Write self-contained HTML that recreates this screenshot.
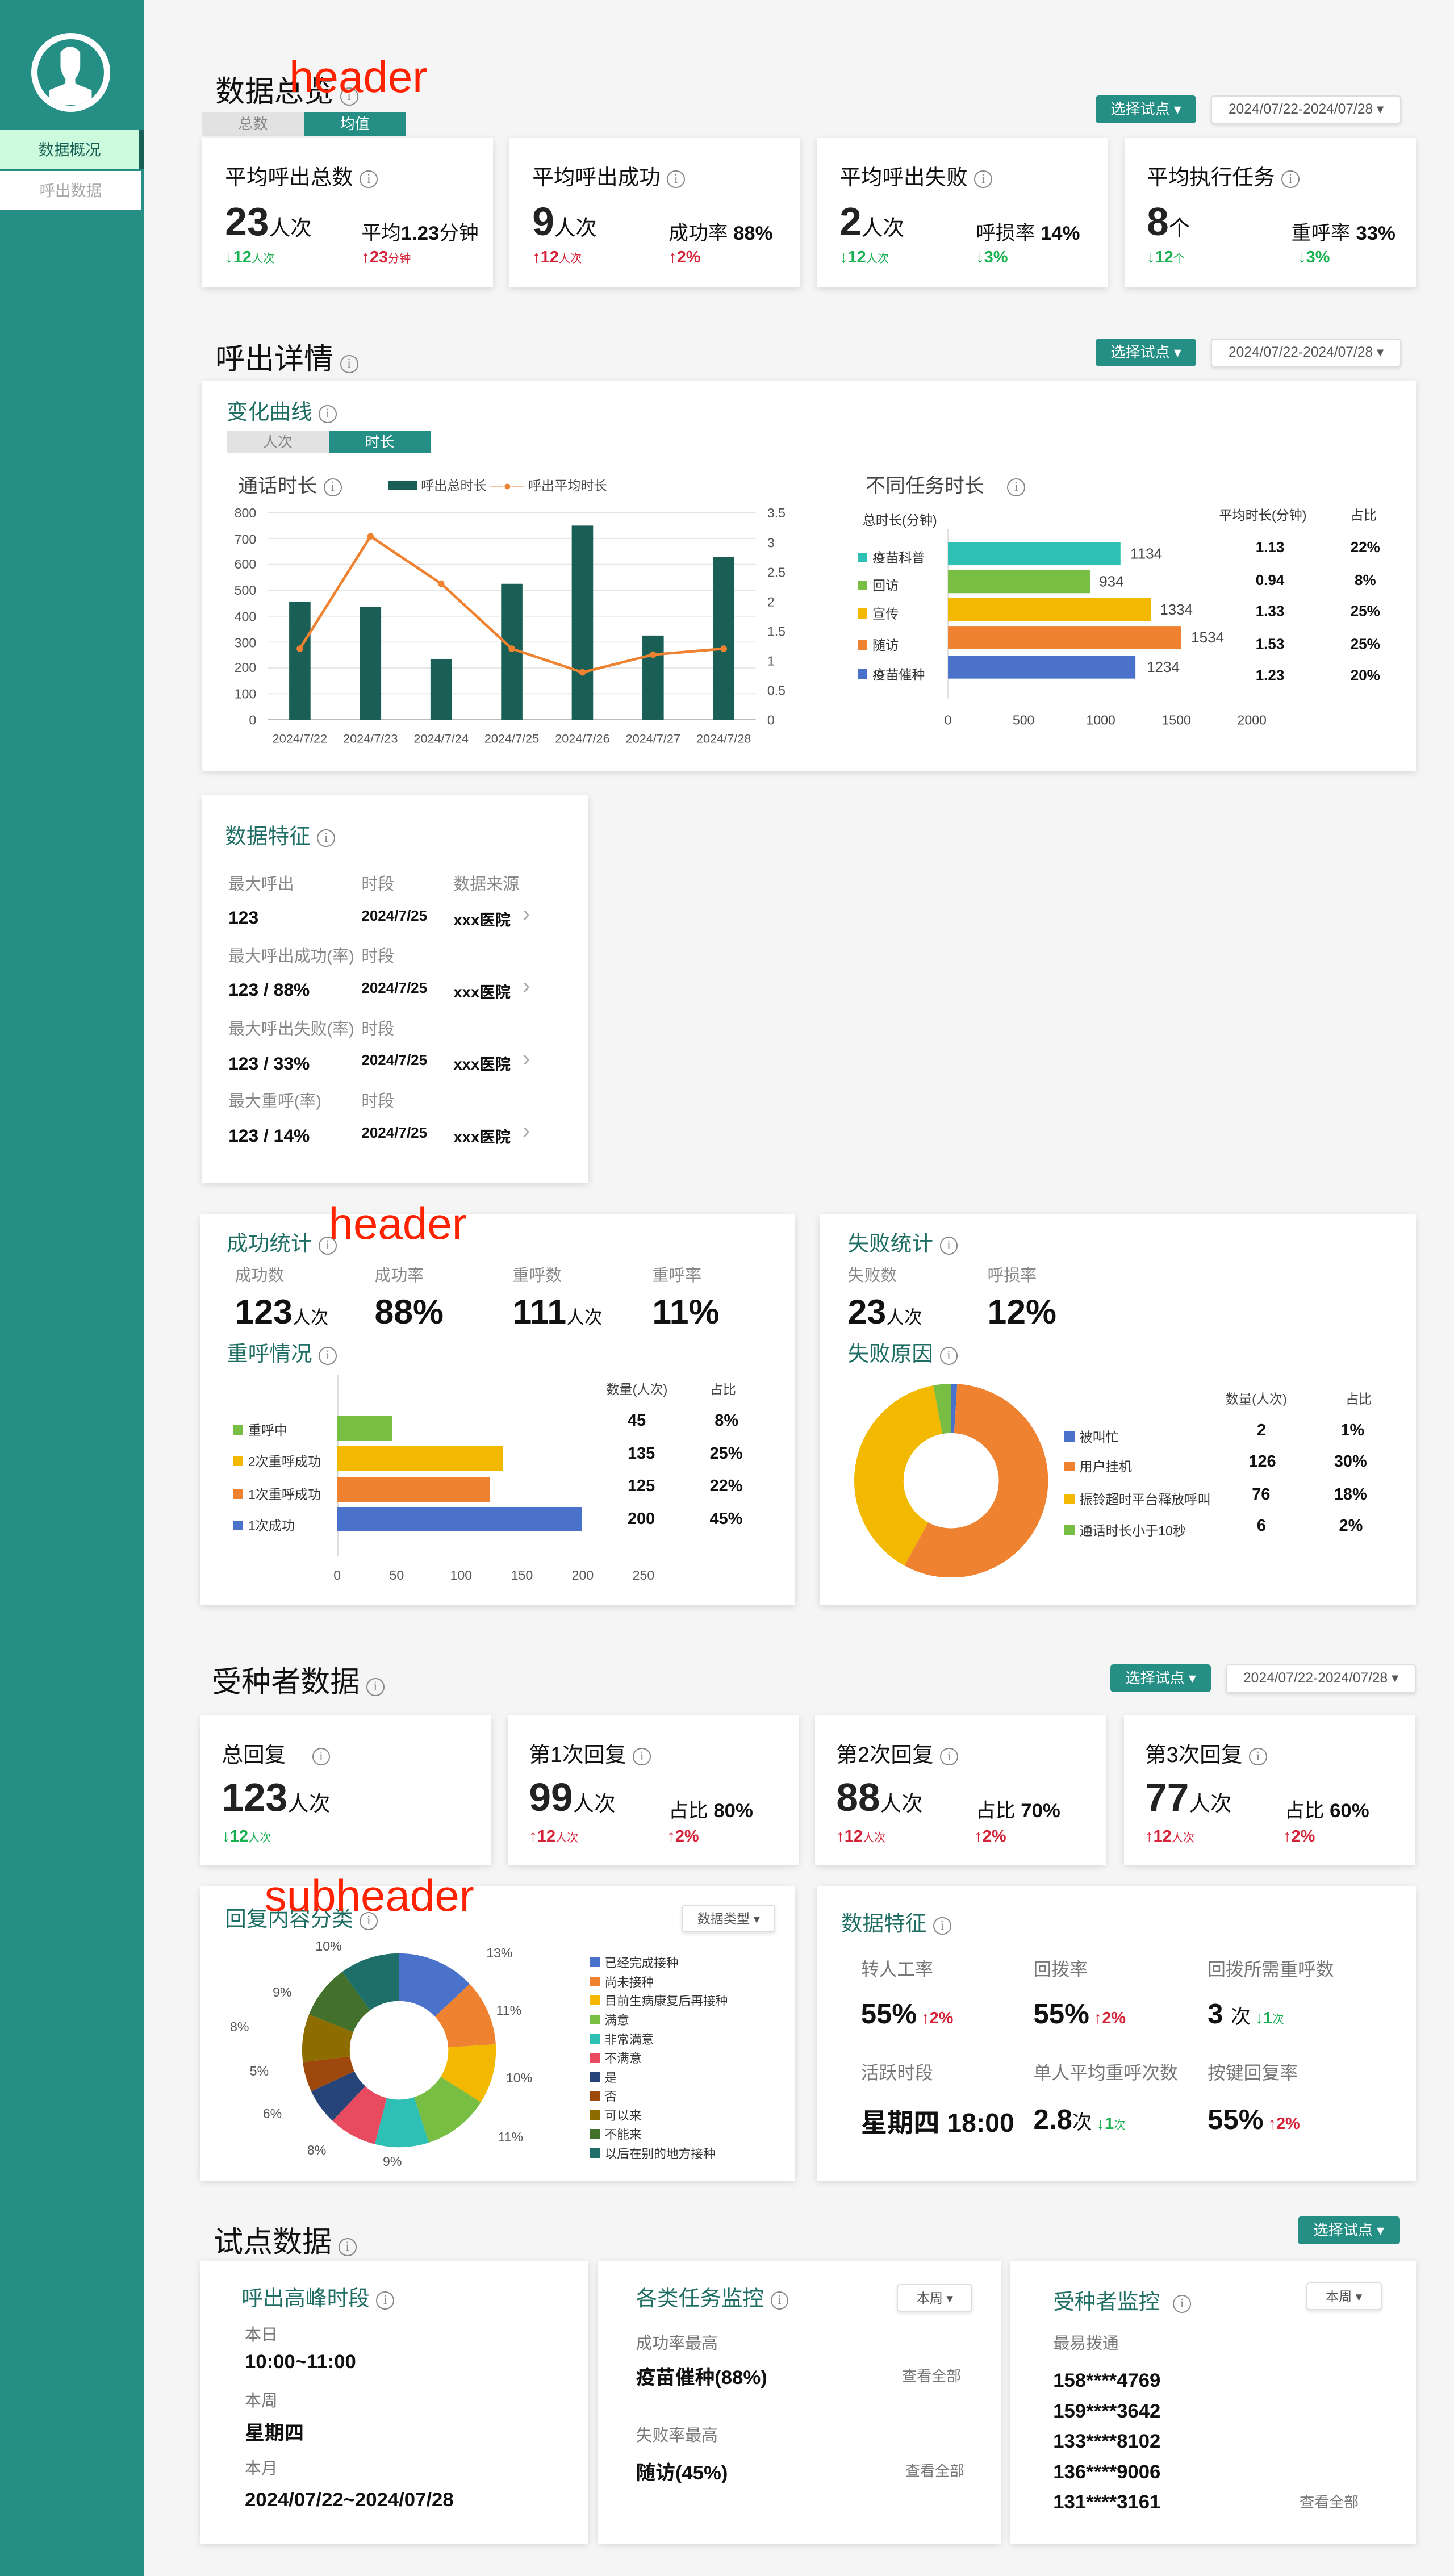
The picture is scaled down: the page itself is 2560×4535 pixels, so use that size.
<!DOCTYPE html>
<html><head><meta charset="utf-8">
<style>
*{margin:0;padding:0;box-sizing:border-box}
html,body{width:2560px;height:4535px;overflow:hidden;background:#f5f5f5}
#z{zoom:2.89266;width:885px;height:1568px;position:relative;font-family:"Liberation Sans","Noto Sans CJK SC",sans-serif;color:#111}
.a{position:absolute;white-space:nowrap}
.card{position:absolute;background:#fff;box-shadow:0 1px 4px rgba(0,0,0,.12)}
.i{display:inline-block;width:11px;height:11px;border:1px solid #888;border-radius:50%;font-size:8px;line-height:9px;text-align:center;color:#888;vertical-align:1px;margin-left:4px;font-family:"Liberation Serif",serif}
.h1{font-size:18px;color:#111}
.ct{font-size:13px;color:#1e6e63}
.gt{font-size:10px;color:#888}
.btn{position:absolute;background:#258f85;color:#fff;font-size:9px;border-radius:2px;text-align:center;line-height:17px}
.dt{position:absolute;background:#fff;border:1px solid #ddd;color:#555;font-size:8.5px;border-radius:2px;text-align:center;line-height:16px;box-shadow:0 1px 2px rgba(0,0,0,.1)}
.big{font-size:24px;font-weight:bold;color:#222}
.u{font-size:13px;font-weight:normal;color:#111}
.g{color:#18b050;font-size:10px;font-weight:bold}
.r{color:#d5243a;font-size:10px;font-weight:bold}
.s{font-size:7px;font-weight:normal}
.b{font-weight:bold}
.red{position:absolute;color:#ff2200;font-size:27px;white-space:nowrap;font-family:"Liberation Sans",sans-serif}
.lg{display:inline-block;width:6px;height:6px;margin-right:3px}
.ax{font-size:8px;color:#555}
</style></head><body><div id="z">

<!-- sidebar -->
<div class="a" style="left:0;top:0;width:87.5px;height:1568px;background:#258f85"></div>
<div class="a" style="left:19px;top:20px;width:48px;height:48px;border:4px solid #fff;border-radius:50%;overflow:hidden">
<svg width="40" height="40" viewBox="0 0 40 40" style="position:absolute;left:0;top:0"><path d="M14 8 Q20 1 26 8 L26 17 Q25 22 23 24 L23 27 L33 31 L33 40 L7 40 L7 31 L17 27 L17 24 Q15 22 14 17 Z" fill="#fff"/></svg></div>
<div class="a" style="left:0;top:79px;width:87.5px;height:24px;background:#ccfadc;border-right:3px solid #1a5f56;font-size:9.5px;color:#1a5f56;text-align:center;line-height:24px">数据概况</div>
<div class="a" style="left:0;top:104px;width:86px;height:24px;background:#fff;font-size:9.5px;color:#aaa;text-align:center;line-height:24px">呼出数据</div>

<!-- section 1 -->
<div class="a h1" style="left:131px;top:41px">数据总览<span class="i">i</span></div>
<div class="red" style="left:176px;top:31px">header</div>
<div class="a" style="left:123px;top:68px;width:62px;height:15px;background:#e2e2e2;font-size:9px;color:#888;text-align:center;line-height:15px">总数</div>
<div class="a" style="left:185px;top:68px;width:62px;height:15px;background:#258f85;font-size:9px;color:#fff;text-align:center;line-height:15px">均值</div>
<div class="btn" style="left:667px;top:58px;width:61px">选择试点 ▾</div>
<div class="dt" style="left:737px;top:58px;width:116px">2024/07/22-2024/07/28 ▾</div>

<div class="card" style="left:123px;top:84px;width:177px;height:91px">
<div class="a" style="left:14px;top:13px;font-size:13px">平均呼出总数<span class="i">i</span></div>
<div class="a big" style="left:14px;top:37px">23<span class="u">人次</span></div>
<div class="a" style="left:97px;top:48px;font-size:12px">平均<b>1.23</b>分钟</div>
<div class="a g" style="left:14px;top:67px">↓12<span class="s">人次</span></div>
<div class="a r" style="left:97px;top:67px">↑23<span class="s">分钟</span></div></div>

<div class="card" style="left:310px;top:84px;width:177px;height:91px">
<div class="a" style="left:14px;top:13px;font-size:13px">平均呼出成功<span class="i">i</span></div>
<div class="a big" style="left:14px;top:37px">9<span class="u">人次</span></div>
<div class="a" style="left:97px;top:48px;font-size:12px">成功率 <b>88%</b></div>
<div class="a r" style="left:14px;top:67px">↑12<span class="s">人次</span></div>
<div class="a r" style="left:97px;top:67px">↑2%</div></div>

<div class="card" style="left:497px;top:84px;width:177px;height:91px">
<div class="a" style="left:14px;top:13px;font-size:13px">平均呼出失败<span class="i">i</span></div>
<div class="a big" style="left:14px;top:37px">2<span class="u">人次</span></div>
<div class="a" style="left:97px;top:48px;font-size:12px">呼损率 <b>14%</b></div>
<div class="a g" style="left:14px;top:67px">↓12<span class="s">人次</span></div>
<div class="a g" style="left:97px;top:67px">↓3%</div></div>

<div class="card" style="left:685px;top:84px;width:177px;height:91px">
<div class="a" style="left:13px;top:13px;font-size:13px">平均执行任务<span class="i">i</span></div>
<div class="a big" style="left:13px;top:37px">8<span class="u">个</span></div>
<div class="a" style="left:101px;top:48px;font-size:12px">重呼率 <b>33%</b></div>
<div class="a g" style="left:13px;top:67px">↓12<span class="s">个</span></div>
<div class="a g" style="left:105px;top:67px">↓3%</div></div>

<!-- section 2 -->
<div class="a h1" style="left:131px;top:204px">呼出详情<span class="i">i</span></div>
<div class="btn" style="left:667px;top:206px;width:61px">选择试点 ▾</div>
<div class="dt" style="left:737px;top:206px;width:116px">2024/07/22-2024/07/28 ▾</div>

<div class="card" style="left:123px;top:232px;width:739px;height:237px">
<div class="a ct" style="left:15px;top:8px">变化曲线<span class="i">i</span></div>
<div class="a" style="left:15px;top:30px;width:62px;height:14px;background:#e2e2e2;font-size:9px;color:#888;text-align:center;line-height:14px">人次</div>
<div class="a" style="left:77px;top:30px;width:62px;height:14px;background:#258f85;font-size:9px;color:#fff;text-align:center;line-height:14px">时长</div>
<div class="a" style="left:22px;top:54px;font-size:12px;color:#444">通话时长<span class="i">i</span></div>
<div class="a" style="left:113px;top:57px;font-size:8px;color:#444"><span style="display:inline-block;width:18px;height:6px;background:#1a5f56;vertical-align:0"></span> 呼出总时长 <span style="color:#ee8230">—●—</span> 呼出平均时长</div>
<div class="a" style="left:404px;top:54px;font-size:12px;color:#444">不同任务时长<span class="i" style="margin-left:14px">i</span></div>
</div>

<svg class="a" style="left:0;top:0" width="885" height="480">
<g stroke="#e5e5e5" stroke-width="0.6">
<line x1="163" x2="460" y1="312" y2="312"/><line x1="163" x2="460" y1="327.75" y2="327.75"/><line x1="163" x2="460" y1="343.5" y2="343.5"/><line x1="163" x2="460" y1="359.25" y2="359.25"/><line x1="163" x2="460" y1="375" y2="375"/><line x1="163" x2="460" y1="390.75" y2="390.75"/><line x1="163" x2="460" y1="406.5" y2="406.5"/><line x1="163" x2="460" y1="422.25" y2="422.25"/></g>
<line x1="163" x2="460" y1="438" y2="438" stroke="#bbb" stroke-width="0.7"/>
<g font-size="8" fill="#555" font-family="Liberation Sans" text-anchor="end">
<text x="156" y="315">800</text><text x="156" y="331">700</text><text x="156" y="346">600</text><text x="156" y="362">500</text><text x="156" y="378">400</text><text x="156" y="394">300</text><text x="156" y="409">200</text><text x="156" y="425">100</text><text x="156" y="441">0</text></g>
<g font-size="8" fill="#555" font-family="Liberation Sans">
<text x="467" y="315">3.5</text><text x="467" y="333">3</text><text x="467" y="351">2.5</text><text x="467" y="369">2</text><text x="467" y="387">1.5</text><text x="467" y="405">1</text><text x="467" y="423">0.5</text><text x="467" y="441">0</text></g>
<g fill="#1a5f56">
<rect x="176" y="366.3" width="13" height="71.7"/><rect x="219" y="369.5" width="13" height="68.5"/><rect x="262" y="401" width="13" height="37"/><rect x="305" y="355.3" width="13" height="82.7"/><rect x="348" y="319.9" width="13" height="118.1"/><rect x="391" y="386.8" width="13" height="51.2"/><rect x="434" y="338.8" width="13" height="99.2"/></g>
<polyline fill="none" stroke="#ee8230" stroke-width="1.6" points="182.5,394.8 225.5,326.4 268.5,355.2 311.5,394.8 354.5,409.2 397.5,398.4 440.5,394.8"/>
<g fill="#ee8230"><circle cx="182.5" cy="394.8" r="2"/><circle cx="225.5" cy="326.4" r="2"/><circle cx="268.5" cy="355.2" r="2"/><circle cx="311.5" cy="394.8" r="2"/><circle cx="354.5" cy="409.2" r="2"/><circle cx="397.5" cy="398.4" r="2"/><circle cx="440.5" cy="394.8" r="2"/></g>
<g font-size="7.5" fill="#555" font-family="Liberation Sans" text-anchor="middle">
<text x="182.5" y="452">2024/7/22</text><text x="225.5" y="452">2024/7/23</text><text x="268.5" y="452">2024/7/24</text><text x="311.5" y="452">2024/7/25</text><text x="354.5" y="452">2024/7/26</text><text x="397.5" y="452">2024/7/27</text><text x="440.5" y="452">2024/7/28</text></g>
<line x1="577" x2="577" y1="322" y2="425" stroke="#ddd" stroke-width="0.6"/>
<rect x="577" y="330" width="105" height="14" fill="#2ec0b5"/>
<rect x="577" y="347" width="86.4" height="14" fill="#78be43"/>
<rect x="577" y="364" width="123.4" height="14" fill="#f2b900"/>
<rect x="577" y="381" width="141.9" height="14" fill="#ee8230"/>
<rect x="577" y="399" width="114.1" height="14" fill="#4a72cb"/>
<g font-size="9" fill="#444" font-family="Liberation Sans">
<text x="688" y="340">1134</text><text x="669" y="357">934</text><text x="706" y="374">1334</text><text x="725" y="391">1534</text><text x="698" y="409">1234</text></g>
<g font-size="8" fill="#444" font-family="Liberation Sans" text-anchor="middle">
<text x="577" y="441">0</text><text x="623" y="441">500</text><text x="670" y="441">1000</text><text x="716" y="441">1500</text><text x="762" y="441">2000</text></g>
<g font-size="9" fill="#111" font-family="Liberation Sans" font-weight="bold" text-anchor="middle">
<text x="773" y="336">1.13</text><text x="773" y="356">0.94</text><text x="773" y="375">1.33</text><text x="773" y="395">1.53</text><text x="773" y="414">1.23</text>
<text x="831" y="336">22%</text><text x="831" y="356">8%</text><text x="831" y="375">25%</text><text x="831" y="395">25%</text><text x="831" y="414">20%</text></g>
</svg>
<div class="a" style="left:525px;top:310px;font-size:8px;color:#333">总时长(分钟)</div>
<div class="a" style="left:742px;top:307px;font-size:8px;color:#333">平均时长(分钟)</div>
<div class="a" style="left:822px;top:307px;font-size:8px;color:#333">占比</div>
<div class="a" style="left:522px;top:333px;font-size:8px;color:#333"><span class="lg" style="background:#2ec0b5"></span>疫苗科普</div>
<div class="a" style="left:522px;top:350px;font-size:8px;color:#333"><span class="lg" style="background:#78be43"></span>回访</div>
<div class="a" style="left:522px;top:367px;font-size:8px;color:#333"><span class="lg" style="background:#f2b900"></span>宣传</div>
<div class="a" style="left:522px;top:386px;font-size:8px;color:#333"><span class="lg" style="background:#ee8230"></span>随访</div>
<div class="a" style="left:522px;top:404px;font-size:8px;color:#333"><span class="lg" style="background:#4a72cb"></span>疫苗催种</div>

<!-- 数据特征 -->
<div class="card" style="left:123px;top:484px;width:235px;height:236px">
<div class="a ct" style="left:14px;top:14px">数据特征<span class="i">i</span></div>
<div class="a gt" style="left:16px;top:46px">最大呼出</div><div class="a gt" style="left:97px;top:46px">时段</div><div class="a gt" style="left:153px;top:46px">数据来源</div>
<div class="a b" style="left:16px;top:68px;font-size:11px">123</div><div class="a b" style="left:97px;top:68px;font-size:9px">2024/7/25</div><div class="a b" style="left:153px;top:68px;font-size:9.5px">xxx医院</div><div class="a" style="left:195px;top:64px;color:#aaa;font-size:14px">›</div>
<div class="a gt" style="left:16px;top:90px">最大呼出成功(率)</div><div class="a gt" style="left:97px;top:90px">时段</div>
<div class="a b" style="left:16px;top:112px;font-size:11px">123 / 88%</div><div class="a b" style="left:97px;top:112px;font-size:9px">2024/7/25</div><div class="a b" style="left:153px;top:112px;font-size:9.5px">xxx医院</div><div class="a" style="left:195px;top:108px;color:#aaa;font-size:14px">›</div>
<div class="a gt" style="left:16px;top:134px">最大呼出失败(率)</div><div class="a gt" style="left:97px;top:134px">时段</div>
<div class="a b" style="left:16px;top:157px;font-size:11px">123 / 33%</div><div class="a b" style="left:97px;top:156px;font-size:9px">2024/7/25</div><div class="a b" style="left:153px;top:156px;font-size:9.5px">xxx医院</div><div class="a" style="left:195px;top:152px;color:#aaa;font-size:14px">›</div>
<div class="a gt" style="left:16px;top:178px">最大重呼(率)</div><div class="a gt" style="left:97px;top:178px">时段</div>
<div class="a b" style="left:16px;top:201px;font-size:11px">123 / 14%</div><div class="a b" style="left:97px;top:200px;font-size:9px">2024/7/25</div><div class="a b" style="left:153px;top:200px;font-size:9.5px">xxx医院</div><div class="a" style="left:195px;top:196px;color:#aaa;font-size:14px">›</div>
</div>

<!-- success -->
<div class="card" style="left:122px;top:739px;width:362px;height:238px">
<div class="a ct" style="left:16px;top:7px">成功统计<span class="i">i</span></div>
<div class="a gt" style="left:21px;top:29px">成功数</div><div class="a gt" style="left:106px;top:29px">成功率</div><div class="a gt" style="left:190px;top:29px">重呼数</div><div class="a gt" style="left:275px;top:29px">重呼率</div>
<div class="a b" style="left:21px;top:47px;font-size:21px">123<span style="font-size:11px;font-weight:normal">人次</span></div>
<div class="a b" style="left:106px;top:47px;font-size:21px">88%</div>
<div class="a b" style="left:190px;top:47px;font-size:21px">111<span style="font-size:11px;font-weight:normal">人次</span></div>
<div class="a b" style="left:275px;top:47px;font-size:21px">11%</div>
<div class="a ct" style="left:16px;top:74px">重呼情况<span class="i">i</span></div>
<div class="a" style="left:247px;top:100px;font-size:8px;color:#444">数量(人次)</div><div class="a" style="left:310px;top:100px;font-size:8px;color:#444">占比</div>
<div class="a" style="left:20px;top:125px;font-size:8px;color:#333"><span class="lg" style="background:#78be43"></span>重呼中</div>
<div class="a" style="left:20px;top:144px;font-size:8px;color:#333"><span class="lg" style="background:#f2b900"></span>2次重呼成功</div>
<div class="a" style="left:20px;top:164px;font-size:8px;color:#333"><span class="lg" style="background:#ee8230"></span>1次重呼成功</div>
<div class="a" style="left:20px;top:183px;font-size:8px;color:#333"><span class="lg" style="background:#4a72cb"></span>1次成功</div>
<div class="a" style="left:83px;top:98px;width:1px;height:110px;background:#ddd"></div>
<div class="a" style="left:83px;top:123px;width:34px;height:15px;background:#78be43"></div>
<div class="a" style="left:83px;top:141px;width:101px;height:15px;background:#f2b900"></div>
<div class="a" style="left:83px;top:160px;width:93px;height:15px;background:#ee8230"></div>
<div class="a" style="left:83px;top:178px;width:149px;height:15px;background:#4a72cb"></div>
<div class="a b" style="left:260px;top:120px;font-size:10px">45</div><div class="a b" style="left:313px;top:120px;font-size:10px">8%</div>
<div class="a b" style="left:260px;top:140px;font-size:10px">135</div><div class="a b" style="left:310px;top:140px;font-size:10px">25%</div>
<div class="a b" style="left:260px;top:160px;font-size:10px">125</div><div class="a b" style="left:310px;top:160px;font-size:10px">22%</div>
<div class="a b" style="left:260px;top:180px;font-size:10px">200</div><div class="a b" style="left:310px;top:180px;font-size:10px">45%</div>
<div class="a ax" style="left:81px;top:215px">0</div><div class="a ax" style="left:115px;top:215px">50</div><div class="a ax" style="left:152px;top:215px">100</div><div class="a ax" style="left:189px;top:215px">150</div><div class="a ax" style="left:226px;top:215px">200</div><div class="a ax" style="left:263px;top:215px">250</div>
</div>
<div class="red" style="left:200px;top:729px">header</div>

<!-- fail -->
<div class="card" style="left:499px;top:739px;width:363px;height:238px">
<div class="a ct" style="left:17px;top:7px">失败统计<span class="i">i</span></div>
<div class="a gt" style="left:17px;top:29px">失败数</div><div class="a gt" style="left:102px;top:29px">呼损率</div>
<div class="a b" style="left:17px;top:47px;font-size:21px">23<span style="font-size:11px;font-weight:normal">人次</span></div>
<div class="a b" style="left:102px;top:47px;font-size:21px">12%</div>
<div class="a ct" style="left:17px;top:74px">失败原因<span class="i">i</span></div>
<svg class="a" style="left:21px;top:103px" width="118" height="118" viewBox="-59 -59 118 118">
<g transform="rotate(-90)" fill="none" stroke-width="30">
<circle r="44" stroke="#4a72cb" stroke-dasharray="2.76 300" stroke-dashoffset="0"/>
<circle r="44" stroke="#ee8230" stroke-dasharray="157.58 300" stroke-dashoffset="-2.76"/>
<circle r="44" stroke="#f2b900" stroke-dasharray="107.82 300" stroke-dashoffset="-160.34"/>
<circle r="44" stroke="#78be43" stroke-dasharray="8.3 300" stroke-dashoffset="-268.16"/>
</g></svg>
<div class="a" style="left:247px;top:106px;font-size:8px;color:#444">数量(人次)</div><div class="a" style="left:320px;top:106px;font-size:8px;color:#444">占比</div>
<div class="a" style="left:149px;top:129px;font-size:8px;color:#333"><span class="lg" style="background:#4a72cb"></span>被叫忙</div>
<div class="a" style="left:149px;top:147px;font-size:8px;color:#333"><span class="lg" style="background:#ee8230"></span>用户挂机</div>
<div class="a" style="left:149px;top:167px;font-size:8px;color:#333"><span class="lg" style="background:#f2b900"></span>振铃超时平台释放呼叫</div>
<div class="a" style="left:149px;top:186px;font-size:8px;color:#333"><span class="lg" style="background:#78be43"></span>通话时长小于10秒</div>
<div class="a b" style="left:266px;top:126px;font-size:10px">2</div><div class="a b" style="left:317px;top:126px;font-size:10px">1%</div>
<div class="a b" style="left:261px;top:145px;font-size:10px">126</div><div class="a b" style="left:313px;top:145px;font-size:10px">30%</div>
<div class="a b" style="left:263px;top:165px;font-size:10px">76</div><div class="a b" style="left:313px;top:165px;font-size:10px">18%</div>
<div class="a b" style="left:266px;top:184px;font-size:10px">6</div><div class="a b" style="left:316px;top:184px;font-size:10px">2%</div>
</div>

<!-- section 受种者 -->
<div class="a h1" style="left:129px;top:1009px">受种者数据<span class="i">i</span></div>
<div class="btn" style="left:676px;top:1013px;width:61px">选择试点 ▾</div>
<div class="dt" style="left:746px;top:1013px;width:116px">2024/07/22-2024/07/28 ▾</div>

<div class="card" style="left:122px;top:1044px;width:177px;height:91px">
<div class="a" style="left:13px;top:13px;font-size:13px">总回复<span class="i" style="margin-left:16px">i</span></div>
<div class="a big" style="left:13px;top:36px">123<span class="u">人次</span></div>
<div class="a g" style="left:13px;top:68px">↓12<span class="s">人次</span></div></div>
<div class="card" style="left:309px;top:1044px;width:177px;height:91px">
<div class="a" style="left:13px;top:13px;font-size:13px">第1次回复<span class="i">i</span></div>
<div class="a big" style="left:13px;top:36px">99<span class="u">人次</span></div>
<div class="a" style="left:98px;top:48px;font-size:12px">占比 <b>80%</b></div>
<div class="a r" style="left:13px;top:68px">↑12<span class="s">人次</span></div><div class="a r" style="left:97px;top:68px">↑2%</div></div>
<div class="card" style="left:496px;top:1044px;width:177px;height:91px">
<div class="a" style="left:13px;top:13px;font-size:13px">第2次回复<span class="i">i</span></div>
<div class="a big" style="left:13px;top:36px">88<span class="u">人次</span></div>
<div class="a" style="left:98px;top:48px;font-size:12px">占比 <b>70%</b></div>
<div class="a r" style="left:13px;top:68px">↑12<span class="s">人次</span></div><div class="a r" style="left:97px;top:68px">↑2%</div></div>
<div class="card" style="left:684px;top:1044px;width:177px;height:91px">
<div class="a" style="left:13px;top:13px;font-size:13px">第3次回复<span class="i">i</span></div>
<div class="a big" style="left:13px;top:36px">77<span class="u">人次</span></div>
<div class="a" style="left:98px;top:48px;font-size:12px">占比 <b>60%</b></div>
<div class="a r" style="left:13px;top:68px">↑12<span class="s">人次</span></div><div class="a r" style="left:97px;top:68px">↑2%</div></div>

<!-- reply categories -->
<div class="card" style="left:122px;top:1148px;width:362px;height:179px">
<div class="a ct" style="left:15px;top:9px">回复内容分类<span class="i">i</span></div>
<div class="dt" style="left:293px;top:11px;width:57px;height:17px;font-size:8px">数据类型 ▾</div>
<svg class="a" style="left:61px;top:40px" width="120" height="120" viewBox="-60 -60 120 120">
<g transform="rotate(-90)" fill="none" stroke-width="29">
<circle r="44.5" stroke="#4a72cb" stroke-dasharray="36.35 300" stroke-dashoffset="0"/>
<circle r="44.5" stroke="#ee8230" stroke-dasharray="30.76 300" stroke-dashoffset="-36.35"/>
<circle r="44.5" stroke="#f2b900" stroke-dasharray="27.96 300" stroke-dashoffset="-67.11"/>
<circle r="44.5" stroke="#78be43" stroke-dasharray="30.76 300" stroke-dashoffset="-95.07"/>
<circle r="44.5" stroke="#2ec0b5" stroke-dasharray="25.16 300" stroke-dashoffset="-125.83"/>
<circle r="44.5" stroke="#e84a5f" stroke-dasharray="22.37 300" stroke-dashoffset="-150.99"/>
<circle r="44.5" stroke="#264478" stroke-dasharray="16.78 300" stroke-dashoffset="-173.36"/>
<circle r="44.5" stroke="#9e480e" stroke-dasharray="13.98 300" stroke-dashoffset="-190.14"/>
<circle r="44.5" stroke="#8d6d00" stroke-dasharray="22.37 300" stroke-dashoffset="-204.12"/>
<circle r="44.5" stroke="#43702b" stroke-dasharray="25.16 300" stroke-dashoffset="-226.49"/>
<circle r="44.5" stroke="#1e6f6a" stroke-dasharray="27.96 300" stroke-dashoffset="-251.65"/>
</g></svg>
<div class="a ax" style="left:174px;top:36px">13%</div><div class="a ax" style="left:180px;top:71px">11%</div><div class="a ax" style="left:186px;top:112px">10%</div><div class="a ax" style="left:181px;top:148px">11%</div><div class="a ax" style="left:111px;top:163px">9%</div><div class="a ax" style="left:65px;top:156px">8%</div><div class="a ax" style="left:38px;top:134px">6%</div><div class="a ax" style="left:30px;top:108px">5%</div><div class="a ax" style="left:18px;top:81px">8%</div><div class="a ax" style="left:44px;top:60px">9%</div><div class="a ax" style="left:70px;top:32px">10%</div>
<div class="a" style="left:237px;top:41px;font-size:7.5px;color:#333;line-height:11.6px">
<span class="lg" style="background:#4a72cb"></span>已经完成接种<br><span class="lg" style="background:#ee8230"></span>尚未接种<br><span class="lg" style="background:#f2b900"></span>目前生病康复后再接种<br><span class="lg" style="background:#78be43"></span>满意<br><span class="lg" style="background:#2ec0b5"></span>非常满意<br><span class="lg" style="background:#e84a5f"></span>不满意<br><span class="lg" style="background:#264478"></span>是<br><span class="lg" style="background:#9e480e"></span>否<br><span class="lg" style="background:#8d6d00"></span>可以来<br><span class="lg" style="background:#43702b"></span>不能来<br><span class="lg" style="background:#1e6f6a"></span>以后在别的地方接种</div>
</div>
<div class="red" style="left:161px;top:1138px">subheader</div>

<div class="card" style="left:497px;top:1148px;width:365px;height:179px">
<div class="a ct" style="left:15px;top:12px">数据特征<span class="i">i</span></div>
<div class="a" style="left:27px;top:42px;font-size:11px;color:#777">转人工率</div><div class="a" style="left:132px;top:42px;font-size:11px;color:#777">回拨率</div><div class="a" style="left:238px;top:42px;font-size:11px;color:#777">回拨所需重呼数</div>
<div class="a b" style="left:27px;top:68px;font-size:17px">55%<span class="r" style="font-size:10px"> ↑2%</span></div>
<div class="a b" style="left:132px;top:68px;font-size:17px">55%<span class="r" style="font-size:10px"> ↑2%</span></div>
<div class="a b" style="left:238px;top:68px;font-size:17px">3 <span style="font-size:12px;font-weight:normal">次</span><span class="g" style="font-size:10px"> ↓1<span class="s">次</span></span></div>
<div class="a" style="left:27px;top:105px;font-size:11px;color:#777">活跃时段</div><div class="a" style="left:132px;top:105px;font-size:11px;color:#777">单人平均重呼次数</div><div class="a" style="left:238px;top:105px;font-size:11px;color:#777">按键回复率</div>
<div class="a b" style="left:27px;top:131px;font-size:16px">星期四 18:00</div>
<div class="a b" style="left:132px;top:132px;font-size:17px">2.8<span style="font-size:12px;font-weight:normal">次</span><span class="g" style="font-size:10px"> ↓1<span class="s">次</span></span></div>
<div class="a b" style="left:238px;top:132px;font-size:17px">55%<span class="r" style="font-size:10px"> ↑2%</span></div>
</div>

<!-- 试点数据 -->
<div class="a h1" style="left:130px;top:1350px">试点数据<span class="i">i</span></div>
<div class="btn" style="left:790px;top:1349px;width:62px">选择试点 ▾</div>

<div class="card" style="left:122px;top:1376px;width:236px;height:172px">
<div class="a ct" style="left:25px;top:12px">呼出高峰时段<span class="i">i</span></div>
<div class="a" style="left:27px;top:37px;font-size:10px;color:#777">本日</div>
<div class="a b" style="left:27px;top:55px;font-size:12px">10:00~11:00</div>
<div class="a" style="left:27px;top:77px;font-size:10px;color:#777">本周</div>
<div class="a b" style="left:27px;top:95px;font-size:12px">星期四</div>
<div class="a" style="left:27px;top:118px;font-size:10px;color:#777">本月</div>
<div class="a b" style="left:27px;top:139px;font-size:12px">2024/07/22~2024/07/28</div>
</div>
<div class="card" style="left:364px;top:1376px;width:245px;height:172px">
<div class="a ct" style="left:23px;top:12px">各类任务监控<span class="i">i</span></div>
<div class="dt" style="left:182px;top:14px;width:46px;height:17px;font-size:8px">本周 ▾</div>
<div class="a" style="left:23px;top:42px;font-size:10px;color:#777">成功率最高</div>
<div class="a b" style="left:23px;top:61px;font-size:12px">疫苗催种(88%)</div>
<div class="a" style="left:185px;top:63px;font-size:9px;color:#777">查看全部</div>
<div class="a" style="left:23px;top:98px;font-size:10px;color:#777">失败率最高</div>
<div class="a b" style="left:23px;top:119px;font-size:12px">随访(45%)</div>
<div class="a" style="left:187px;top:121px;font-size:9px;color:#777">查看全部</div>
</div>
<div class="card" style="left:615px;top:1376px;width:247px;height:172px">
<div class="a ct" style="left:26px;top:14px">受种者监控<span class="i" style="margin-left:8px">i</span></div>
<div class="dt" style="left:180px;top:13px;width:46px;height:17px;font-size:8px">本周 ▾</div>
<div class="a" style="left:26px;top:42px;font-size:10px;color:#777">最易拨通</div>
<div class="a b" style="left:26px;top:64px;font-size:12px;line-height:18.5px">158****4769<br>159****3642<br>133****8102<br>136****9006<br>131****3161</div>
<div class="a" style="left:176px;top:140px;font-size:9px;color:#777">查看全部</div>
</div>

</div></body></html>
